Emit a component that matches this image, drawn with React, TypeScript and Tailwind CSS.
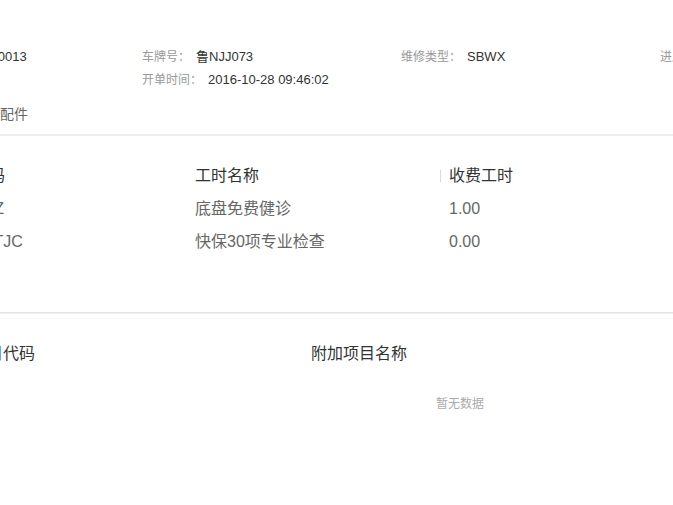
import React from "react";

const font = { fontFamily: '"Liberation Sans", "Noto Sans CJK SC", sans-serif' };

function Info({ label, value }: { label: string; value: string }) {
  return (
    <div className="flex h-[23px] items-center whitespace-nowrap">
      <span className="text-[12px] text-[#999]">{label}</span>
      <span className="ml-[6px] text-[13px] text-[#333]">{value}</span>
    </div>
  );
}

export default function App() {
  const rows = [
    ["DPMFJZ", "底盘免费健诊", "1.00"],
    ["QDMWTJC", "快保30项专业检查", "0.00"],
  ];
  return (
    <div className="w-[673px] h-[505px] overflow-hidden bg-white" style={font}>
      <div className="-ml-[121px] w-[1162px]">
        {/* info */}
        <div className="pt-[45px] pl-[4px] grid grid-cols-[259px_259px_259px_259px]">
          <div className="-ml-[9px]">
            <Info label="维修单号：" value="201610280013" />
          </div>
          <div>
            <Info label="车牌号：" value="鲁NJJ073" />
            <Info label="开单时间：" value="2016-10-28 09:46:02" />
          </div>
          <div>
            <Info label="维修类型：" value="SBWX" />
          </div>
          <div>
            <Info label="进厂里程：" value="0" />
          </div>
        </div>
        <div className="mt-[13px] w-[149px] h-[20px] flex items-center justify-end text-[14px] text-[#666] whitespace-nowrap">
          维修项目及配件
        </div>
        <div className="mt-[10px] h-[2px] bg-[#eeeeee]" />

        {/* table 1 */}
        <div className="mt-[23px] pl-[62px] text-[16px]">
          <div className="grid grid-cols-[254px_254px_254px_254px] h-[33px] items-center text-[#333] whitespace-nowrap">
            <div>工时代码</div>
            <div>工时名称</div>
            <div className="relative">
              <span className="absolute -left-[9px] top-1/2 -translate-y-1/2 h-[12px] w-px bg-[#d9d9d9]" />
              收费工时
            </div>
            <div>工时费</div>
          </div>
          {rows.map((r) => (
            <div
              key={r[0]}
              className="grid grid-cols-[254px_254px_254px_254px] h-[33px] items-center text-[#666] whitespace-nowrap"
            >
              <div className="overflow-hidden">{r[0]}</div>
              <div>{r[1]}</div>
              <div>{r[2]}</div>
              <div></div>
            </div>
          ))}
        </div>

        <div className="mt-[54px] h-px bg-[#e4e4e4]" />
        <div className="h-px bg-[#f2f2f2]" />
        <div className="mt-[4px] h-px bg-[#f8f8f8]" />

        {/* table 2 */}
        <div className="pl-[60px] pr-[60px] text-[16px]">
          <div className="mt-[18px] grid grid-cols-[372px_372px_298px] h-[33px] items-center text-[#333] whitespace-nowrap">
            <div>附加项目代码</div>
            <div>附加项目名称</div>
            <div>金额</div>
          </div>
          <div className="mt-[26px] flex justify-center text-[12px] text-[#aaa] h-[16px] items-center">
            暂无数据
          </div>
        </div>
      </div>
    </div>
  );
}
